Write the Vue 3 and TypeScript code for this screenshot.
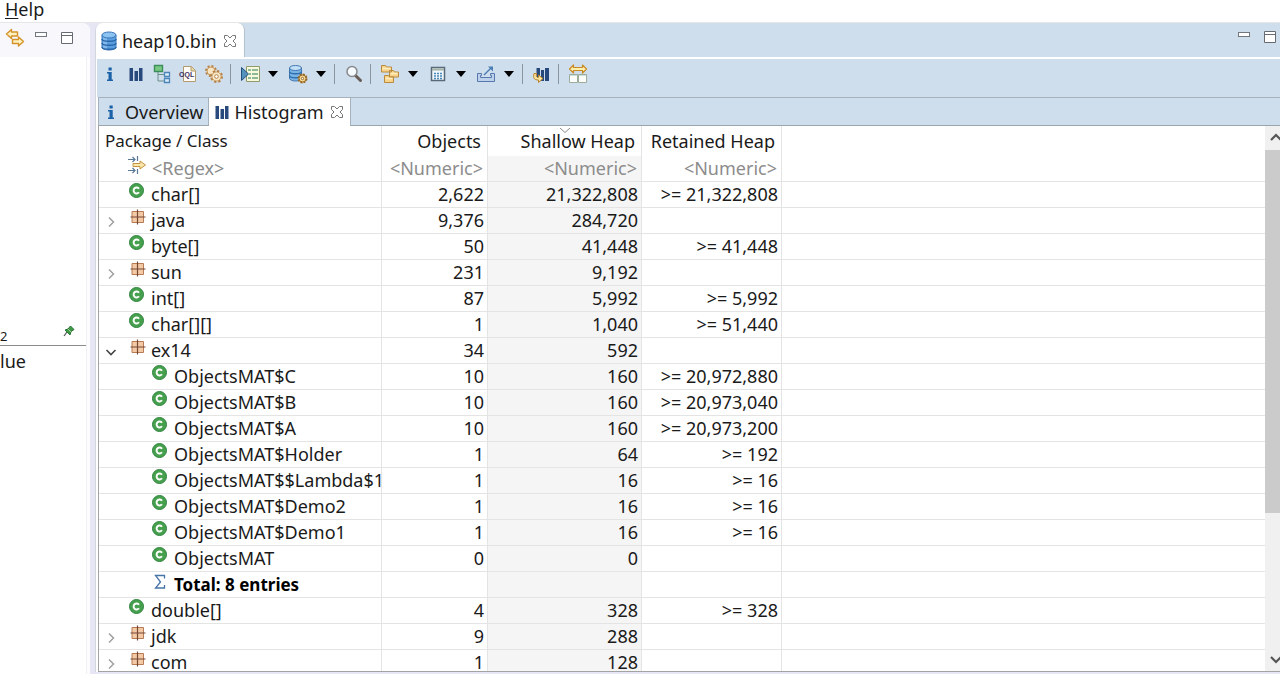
<script setup lang="ts">
import { ref } from 'vue'

type Kind = 'class' | 'package' | 'total'
interface Row {
  name: string
  kind: Kind
  depth: number
  objects: string
  shallow: string
  retained: string
  open?: boolean
}

const row = (name: string, kind: Kind, depth: number, objects = '', shallow = '', retained = '', open = false): Row => ({
  name, kind, depth, objects, shallow, retained, open,
})

const rows = ref<Row[]>([
  row('char[]', 'class', 0, '2,622', '21,322,808', '>= 21,322,808'),
  row('java', 'package', 0, '9,376', '284,720'),
  row('byte[]', 'class', 0, '50', '41,448', '>= 41,448'),
  row('sun', 'package', 0, '231', '9,192'),
  row('int[]', 'class', 0, '87', '5,992', '>= 5,992'),
  row('char[][]', 'class', 0, '1', '1,040', '>= 51,440'),
  row('ex14', 'package', 0, '34', '592', '', true),
  row('ObjectsMAT$C', 'class', 1, '10', '160', '>= 20,972,880'),
  row('ObjectsMAT$B', 'class', 1, '10', '160', '>= 20,973,040'),
  row('ObjectsMAT$A', 'class', 1, '10', '160', '>= 20,973,200'),
  row('ObjectsMAT$Holder', 'class', 1, '1', '64', '>= 192'),
  row('ObjectsMAT$$Lambda$1', 'class', 1, '1', '16', '>= 16'),
  row('ObjectsMAT$Demo2', 'class', 1, '1', '16', '>= 16'),
  row('ObjectsMAT$Demo1', 'class', 1, '1', '16', '>= 16'),
  row('ObjectsMAT', 'class', 1, '0', '0'),
  row('Total: 8 entries', 'total', 1),
  row('double[]', 'class', 0, '4', '328', '>= 328'),
  row('jdk', 'package', 0, '9', '288'),
  row('com', 'package', 0, '1', '128'),
])

const regex = ref('')
const numeric = ref(['', '', ''])
const numericLabels = ['Objects filter', 'Shallow heap filter', 'Retained heap filter']
</script>

<template>
  <div class="app">
    <nav class="menubar"><button type="button" class="menu"><u>H</u>elp</button></nav>
    <div class="workbench">
      <aside class="side">
        <div class="side-bar">
          <button type="button" aria-label="Link with editor">
            <svg width="20" height="20" viewBox="0 0 20 20" fill="#fff1bd" stroke="#d4922b" stroke-width="1.4" stroke-linejoin="round">
              <path d="M1.500 6 6.500 1.500V4h6v4h-6v2.500z" />
              <path d="M18.500 13.500 13.500 9v2.500h-6v4h6V18z" />
            </svg>
          </button>
          <button type="button" aria-label="Minimize">
            <svg width="14" height="14" viewBox="0 0 14 14"><rect x="1.500" y="1.500" width="11" height="4" fill="#fff" stroke="#72767e" /></svg>
          </button>
          <button type="button" aria-label="Maximize">
            <svg width="14" height="14" viewBox="0 0 14 14"><path d="M1.500 1.500h11v11h-11zM1.500 4.500h11" fill="#fff" stroke="#666a72" /></svg>
          </button>
        </div>
        <div class="side-body">
          <div class="side-space"></div>
          <div class="side-tab">
            <span>2</span>
            <button type="button" aria-label="Pin">
              <svg width="12" height="12" viewBox="0 0 12 12"><path d="m1 11 3-4" stroke="#555" stroke-width="1.200" /><path d="m2 5 3-1 2.500-3L11 4.500 8 6.500 7 10z" fill="#3f9a45" stroke="#2a7135" /><path d="m5 4 3 3" stroke="#a5d69b" /></svg>
            </button>
          </div>
          <div class="side-head">lue</div>
        </div>
      </aside>

      <main class="editor">
        <div class="file-bar">
          <div class="file-tab">
            <svg width="18" height="20" viewBox="0 0 18 20" stroke="#3a77ba">
              <path d="M2 4v12c0 4 14 4 14 0V4z" fill="#5b9ee0" />
              <path d="M4 6v12M6 7v12" stroke="#a9d3f6" />
              <path d="M2 8c0 3 14 3 14 0M2 12c0 3 14 3 14 0M2 16c0 3 14 3 14 0" fill="none" stroke="#2865a8" stroke-width="1.500" />
              <ellipse cx="9" cy="4" rx="7" ry="3" fill="#8cc3f0" />
            </svg>
            <span>heap10.bin</span>
            <button type="button" aria-label="Close heap10.bin">
              <svg width="14" height="14" viewBox="0 0 14 14"><path d="M1.500 1.500h3L7 4l2.500-2.500h3v3L10 7l2.500 2.500v3h-3L7 10l-2.500 2.500h-3v-3L4 7 1.500 4.500z" fill="#fff" stroke="#777" /></svg>
            </button>
          </div>
          <div class="window-tools">
            <button type="button" aria-label="Minimize editor">
              <svg width="14" height="14" viewBox="0 0 14 14"><rect x="1.500" y="2.500" width="11" height="4" fill="#fff" stroke="#72767e" /></svg>
            </button>
            <button type="button" aria-label="Maximize editor">
              <svg width="14" height="14" viewBox="0 0 14 14"><path d="M1.500 1.500h11v11h-11zM1.500 4.500h11" fill="#fff" stroke="#666a72" /></svg>
            </button>
          </div>
        </div>

        <div class="toolbar" role="toolbar">
          <button type="button" class="tool" aria-label="Overview"><svg width="20" height="20" viewBox="0 0 20 20"><path d="M8.500 3.500h3.200v3H8.500zM7 8h4.700v7.500H13V17H7v-1.500h1.500v-6H7z" fill="#1c62a8" /></svg></button>
          <button type="button" class="tool" aria-label="Histogram"><svg width="20" height="20" viewBox="0 0 20 20" fill="#28497c"><path d="M3.500 4H7v13H3.500zM8.500 7h3.500v10H8.500zM13 4h3.500v13H13z" /></svg></button>
          <button type="button" class="tool" aria-label="Dominator tree"><svg width="20" height="20" viewBox="0 0 20 20"><path d="M6 7v10h7M6 10.500h7" fill="none" stroke="#6b8d8c" /><path d="M2.500 1.500h8v6h-8z" fill="#79c884" stroke="#3b8e59" stroke-width="1.400" /><path d="M12.500 8.500h5v4h-5zM12.500 14.500h5v4h-5z" fill="#ddecfa" stroke="#4a86ba" stroke-width="1.300" /></svg></button>
          <button type="button" class="tool" aria-label="OQL">
            <svg width="20" height="20" viewBox="0 0 20 20"><path d="M5.500 2.500h8l4 4v11h-12z" fill="#fffdf5" stroke="#b19a70" /><path d="M13 2.500V7h4.500" fill="#e8d6a7" stroke="#b19a70" /><text x="1" y="13" class="oql">OQL</text></svg>
          </button>
          <button type="button" class="tool" aria-label="Run expert system">
            <svg width="20" height="20" viewBox="0 0 20 20" fill="#f7e6c3" stroke="#b5834a"><circle cx="7" cy="7" r="5" stroke-width="2" stroke-dasharray="2 1.900" /><circle cx="7" cy="7" r="4" stroke-width=".8" /><circle cx="12.500" cy="12.500" r="5.500" stroke-width="2" stroke-dasharray="2.300 2" /><circle cx="12.500" cy="12.500" r="4.600" stroke-width=".8" /><circle cx="12.500" cy="12.500" r="1.800" fill="#fff" /></svg>
          </button>
          <i class="sep"></i>
          <span class="split">
            <button type="button" class="tool" aria-label="Run report"><svg width="20" height="20" viewBox="0 0 20 20"><path d="M6.500 2.500h13v15h-13z" fill="#f7f9df" stroke="#919a68" /><path d="M8 6h3m1 0h6M9 10h2m1 0h6M8 14h3m1 0h6" stroke="#6ba480" stroke-width="1.600" /><path d="M1.500 3.500v13l7-6.500z" fill="#5491bd" stroke="#234f7c" /></svg></button>
            <button type="button" class="drop" aria-label="Run report options"><svg width="12" height="6" viewBox="0 0 12 6"><path d="M1 0h10L6 6z" /></svg></button>
          </span>
          <span class="split">
            <button type="button" class="tool" aria-label="Query browser"><svg width="20" height="20" viewBox="0 0 20 20"><path d="M1.500 4v10c0 4 12 4 12 0V4z" fill="#79b2e5" stroke="#4178af" /><path d="M1.500 7.500c0 3 12 3 12 0M1.500 11.500c0 3 12 3 12 0" fill="none" stroke="#2e6eaf" stroke-width="1.400" /><ellipse cx="7.500" cy="4" rx="6" ry="2.500" fill="#c2e0f7" stroke="#4178af" /><circle cx="14.500" cy="14.500" r="4" fill="#f9df98" stroke="#956524" stroke-width="2" stroke-dasharray="2 1.100" /><circle cx="14.500" cy="14.500" r="3.500" fill="#f9df98" stroke="#956524" /><circle cx="14.500" cy="14.500" r="1.200" fill="#fff" stroke="#956524" /></svg></button>
            <button type="button" class="drop" aria-label="Query options"><svg width="12" height="6" viewBox="0 0 12 6"><path d="M1 0h10L6 6z" /></svg></button>
          </span>
          <i class="sep"></i>
          <button type="button" class="tool" aria-label="Find"><svg width="20" height="20" viewBox="0 0 20 20"><path d="m11.500 11.500 5 5" stroke="#675c56" stroke-width="3" stroke-linecap="round" /><circle cx="8" cy="7.500" r="5" fill="#f6fbff" stroke="#87888b" stroke-width="1.500" /></svg></button>
          <i class="sep"></i>
          <span class="split">
            <button type="button" class="tool" aria-label="Group result"><svg width="20" height="20" viewBox="0 0 20 20" fill="#f8d48a" stroke="#b98a3e"><path d="M1.500 3V1.500h4l1 1.500h5v5h-10zM9.500 8V6.500h4L14.500 8h4v5h-9zM4.500 13v-1.500h4L9.500 13h4v5.500h-9z" /><path d="M2.500 4.500h8M10.500 9.500h7M5.500 14.500h7" stroke="#ffeec2" stroke-width="1.500" /></svg></button>
            <button type="button" class="drop" aria-label="Grouping options"><svg width="12" height="6" viewBox="0 0 12 6"><path d="M1 0h10L6 6z" /></svg></button>
          </span>
          <span class="split">
            <button type="button" class="tool" aria-label="Calculate retained size"><svg width="20" height="20" viewBox="0 0 20 20"><path d="M3.500 3.500h13v13h-13z" fill="#eff7fc" stroke="#586979" stroke-width="1.500" /><path d="M4 5.500h12" stroke="#a4b2a6" stroke-width="2" /><path d="M6 9.500h8M6 12h8M6 14.500h8" stroke="#4c88b7" stroke-width="1.500" stroke-dasharray="2 1" /></svg></button>
            <button type="button" class="drop" aria-label="Calculation options"><svg width="12" height="6" viewBox="0 0 12 6"><path d="M1 0h10L6 6z" /></svg></button>
          </span>
          <span class="split">
            <button type="button" class="tool" aria-label="Export"><svg width="20" height="20" viewBox="0 0 20 20"><path d="M1.500 9.500h4v2h-1v2h11v-2h-1v-2h4v8h-17z" fill="#bdd1eb" stroke="#5778ae" /><path d="m8 11 7-7" stroke="#4d7db5" stroke-width="1.500" /><path d="M12 2.500h5v5z" fill="#4d7db5" /></svg></button>
            <button type="button" class="drop" aria-label="Export options"><svg width="12" height="6" viewBox="0 0 12 6"><path d="M1 0h10L6 6z" /></svg></button>
          </span>
          <i class="sep"></i>
          <button type="button" class="tool" aria-label="Compare histogram"><svg width="20" height="20" viewBox="0 0 20 20"><path d="M4.500 4H8v12H4.500zM9 6h3v11H9zM13 4h4v13h-4z" fill="#28497c" /><path d="M2 9.500c-1 4.500 0 6.500 4.500 6.500v2.500L11 14.500 6.500 11v2.500C4.500 13.500 4 12.500 4.500 9.500z" fill="#fae39d" stroke="#b9842b" /></svg></button>
          <i class="sep"></i>
          <button type="button" class="tool" aria-label="Compare tables"><svg width="20" height="20" viewBox="0 0 20 20"><path d="m1.500 5 4-4v2.500h9V1l4 4-4 4V6.500h-9V9z" fill="#fff0ae" stroke="#c98b26" stroke-width="1.200" stroke-linejoin="round" /><path d="M1.500 10.500h8v8h-8zM10.500 10.500h8v8h-8z" fill="#fbfdfb" stroke="#9cad9d" /><path d="M2 11.500h7M11 11.500h7" stroke="#ccdfdb" /></svg></button>
        </div>

        <div class="tabs" role="tablist">
          <button type="button" role="tab" class="tab" aria-selected="false">
            <svg width="20" height="20" viewBox="0 0 20 20"><path d="M7.500 3.500h3.200v3H7.500zM6 8h4.700v7.500H12V17H6v-1.500h1.500v-6H6z" fill="#1c62a8" /></svg>
            <span>Overview</span>
          </button>
          <button type="button" role="tab" class="tab active" aria-selected="true">
            <svg width="20" height="20" viewBox="0 0 20 20" fill="#28497c"><path d="M3.500 4H7v13H3.500zM8.500 7h3.500v10H8.500zM13 4h3.500v13H13z" /></svg>
            <span>Histogram</span>
            <svg class="close" width="14" height="14" viewBox="0 0 14 14"><path d="M1.500 1.500h3L7 4l2.500-2.500h3v3L10 7l2.500 2.500v3h-3L7 10l-2.500 2.500h-3v-3L4 7 1.500 4.500z" fill="#fff" stroke="#777" /></svg>
          </button>
        </div>

        <div class="content">
          <div class="grid">
            <table>
              <colgroup><col class="c-name" /><col class="c-obj" /><col class="c-shallow" /><col class="c-retained" /><col /></colgroup>
              <thead>
                <tr>
                  <th scope="col" class="first">Package / Class</th>
                  <th scope="col">Objects</th>
                  <th scope="col" class="sorted">
                    <svg width="12" height="6" viewBox="0 0 12 6" fill="none" stroke="#8b8b8b"><path d="m1 0 5 4.500L11 0" /></svg>
                    Shallow Heap
                  </th>
                  <th scope="col">Retained Heap</th>
                  <td></td>
                </tr>
              </thead>
              <tbody>
                <tr class="filter">
                  <td>
                    <div class="name">
                      <span class="twist"></span>
                      <svg class="icon" width="20" height="20" viewBox="0 0 20 20"><path d="M0 3.500h7M0 14.500h7M4.500 1 7 3.500 4.500 6M4.500 12 7 14.500 4.500 17M9.500 0v5M9.500 13v5" fill="none" stroke="#587895" stroke-width="1.200" /><path d="M5 7.500h7V5l5.500 4-5.500 4v-2.500H5z" fill="#fbe7ab" stroke="#c29345" /></svg>
                      <input v-model="regex" type="text" placeholder="<Regex>" aria-label="Class name filter" />
                    </div>
                  </td>
                  <td v-for="(label, i) in numericLabels" :key="label" :class="{ shade: i === 1 }">
                    <input v-model="numeric[i]" type="text" placeholder="<Numeric>" :aria-label="label" />
                  </td>
                  <td></td>
                </tr>
                <tr v-for="r in rows" :key="r.name">
                  <td>
                    <div class="name" :class="{ child: r.depth === 1, total: r.kind === 'total' }">
                      <button v-if="r.kind === 'package'" type="button" class="twist" :aria-label="'Toggle ' + r.name" :aria-expanded="r.open">
                        <svg width="12" height="12" viewBox="0 0 12 12" fill="none">
                          <path v-if="r.open" d="m1.500 4 4.500 4.500L10.500 4" stroke="#444" stroke-width="1.600" />
                          <path v-else d="m4 1.500 4.500 4.500L4 10.500" stroke="#a0a0a0" stroke-width="1.500" />
                        </svg>
                      </button>
                      <span v-else class="twist"></span>
                      <svg v-if="r.kind === 'class'" class="icon" width="18" height="18" viewBox="0 0 18 18">
                        <circle cx="8.500" cy="8.500" r="7" fill="#46a04d" stroke="#2f8440" />
                        <path d="M11 6.700A3 3 0 1 0 11 10.300" fill="none" stroke="#fff" stroke-width="1.900" />
                      </svg>
                      <svg v-else-if="r.kind === 'package'" class="icon" width="18" height="18" viewBox="0 0 18 18">
                        <path d="M4 3.500h11.500v11H4z" fill="#f3caa5" stroke="#b77b55" />
                        <path d="M9.500 1.500v15M2.500 9h15" stroke="#764837" stroke-width="1.200" />
                      </svg>
                      <svg v-else class="icon" width="18" height="18" viewBox="0 0 18 18"><path d="M13.500 6.500v-3h-9l5 6.500-5 6h9v-3" fill="none" stroke="#4774a8" stroke-width="1.300" /></svg>
                      <span class="label">{{ r.name }}</span>
                    </div>
                  </td>
                  <td>{{ r.objects }}</td>
                  <td class="shade">{{ r.shallow }}</td>
                  <td>{{ r.retained }}</td>
                  <td></td>
                </tr>
              </tbody>
            </table>
          </div>
          <div class="scroll" aria-hidden="true">
            <svg width="22" height="24" viewBox="0 0 22 24" fill="none"><path d="m6 14 5-5 5 5" stroke="#555" stroke-width="2.200" /></svg>
            <div class="track"><div class="thumb"></div></div>
            <svg width="22" height="24" viewBox="0 0 22 24" fill="none"><path d="m6 10 5 5 5-5" stroke="#555" stroke-width="2.200" /></svg>
          </div>
        </div>
      </main>
    </div>
  </div>
</template>

<style>
body {
  margin: 0;
  overflow: hidden;
}
</style>

<style scoped>
.app {
  display: flex;
  flex-direction: column;
  height: 100vh;
  overflow: hidden;
  background: #fff;
  color: #1a1a1a;
  font: 18px/24px "Noto Sans", "Open Sans", sans-serif;
}
* { box-sizing: border-box; }
button {
  padding: 0;
  border: 0;
  background: none;
  color: inherit;
  font: inherit;
}
svg { display: block; flex: none; }
.menubar {
  flex: none;
  height: 22px;
  padding-left: 5px;
}
.menu { display: block; height: 18px; line-height: 18px; }
.menu u { text-underline-offset: 2px; }
.workbench {
  display: flex;
  flex: 1;
  min-height: 0;
  border-top: 1px solid #e6e6e6;
  background: #e6e6f5;
}
.side {
  display: flex;
  flex: none;
  flex-direction: column;
  width: 90px;
  border-top-right-radius: 8px;
  background: #fdfdff;
  overflow: hidden;
}
.side-bar {
  display: flex;
  gap: 12px;
  height: 34px;
  padding: 5px 0 0 5px;
  background: #f7f7fc;
}
.side-bar button { height: 20px; }
.side-bar button + button { height: 14px; }
.side-bar button:nth-child(2) { margin-left: -3px; margin-top: 3px; }
.side-bar button:nth-child(3) { margin-top: 3px; }
.side-body {
  display: flex;
  flex: 1;
  flex-direction: column;
  margin-right: 3px;
  border-right: 1px solid #f0f0f6;
  background: #fff;
}
.side-space { height: 264px; }
.side-tab {
  display: flex;
  justify-content: space-between;
  height: 25px;
  padding-right: 11px;
  border-bottom: 1px solid #8c8c8c;
  font-size: 13px;
  line-height: 30px;
}
.side-tab button { height: 20px; }
.side-head { padding-top: 3px; }
.editor {
  display: flex;
  flex: 1;
  flex-direction: column;
  min-width: 0;
  margin: 0 0 2px 5px;
  border-left: 1px solid #d5d5de;
  border-top-left-radius: 8px;
  background: #fff;
}
.file-bar {
  display: flex;
  flex: none;
  justify-content: space-between;
  height: 36px;
  border-bottom: 2px solid #fff;
  border-top-left-radius: 8px;
  background: #cfdeed;
}
.file-tab {
  display: flex;
  align-items: center;
  gap: 4px;
  padding: 2px 7px 0 4px;
  border-right: 1px solid #b4c0cc;
  border-radius: 7px 7px 0 0;
  background: #fff;
}
.file-tab button { margin-left: 2px; }
.window-tools {
  display: flex;
  gap: 12px;
  padding: 7px 3px 0 0;
}
.window-tools button { height: 14px; }
.toolbar {
  display: flex;
  flex: none;
  align-items: center;
  height: 38px;
  margin-left: 1px;
  padding-bottom: 8px;
  background: #cfdeed;
}
.tool {
  display: grid;
  flex: none;
  width: 26px;
  height: 28px;
  place-items: center;
}
.drop {
  display: grid;
  width: 20px;
  height: 28px;
  place-items: center;
}
.split { display: flex; }
.split + .split { margin-left: 2px; }
.sep {
  width: 1px;
  height: 20px;
  margin: 0 6px 0 3px;
  background: #8a949e;
}
.oql { font: bold 7px "Liberation Sans", sans-serif; fill: #3b2f63; }
.tabs {
  display: flex;
  flex: none;
  height: 29px;
  margin-left: 2px;
  border-top: 1px solid #a5b1bd;
  border-bottom: 1px solid #9aa5b0;
  border-left: 1px solid #a5b1bd;
  background: #cfdeed;
}
.tab {
  display: flex;
  align-items: center;
  gap: 3px;
  padding: 1px 4px 0 3px;
  border-right: 1px solid #a5b1bd;
}
.tab.active { margin-bottom: -1px; background: #fff; padding: 0 6px 0 3px; }
.close { margin-left: 3px; }
.content {
  display: flex;
  flex: 1;
  min-height: 0;
  margin-left: 2px;
  border-bottom: 1px solid #a3a3a3;
  border-left: 1px solid #a3a3a3;
}
.grid { flex: 1; min-width: 0; overflow: hidden; }
table {
  width: 100%;
  border-collapse: separate;
  border-spacing: 0;
  table-layout: fixed;
}
.c-name { width: 283px; }
.c-obj { width: 106px; }
.c-shallow { width: 154px; }
.c-retained { width: 140px; }
th, td {
  height: 26px;
  padding: 0 3px 0 0;
  border-right: 1px solid #e4e4e4;
  border-bottom: 1px solid #e4e4e4;
  line-height: 25px;
  text-align: right;
  white-space: nowrap;
}
td:first-child { padding: 0; }
td:last-child { border-right: 0; }
thead th, thead td {
  height: 30px;
  padding-right: 6px;
  border-bottom: 0;
  font-weight: 400;
  line-height: 30px;
}
th.first { padding-left: 6px; font-size: 17px; text-align: left; }
.sorted { position: relative; }
.sorted svg { position: absolute; top: 2px; right: 0; left: 0; margin: 0 auto; }
.shade { background: #f5f5f5; }
.name {
  display: flex;
  height: 25px;
  text-align: left;
}
.name.child { padding-left: 23px; }
.twist {
  display: grid;
  flex: none;
  width: 24px;
  height: 27px;
  margin-right: 5px;
  place-items: center;
}
.icon { margin-right: 5px; }
.total .label { font-size: 17px; font-weight: 700; color: #000; }
.filter .icon { margin-right: 4px; }
input {
  display: block;
  width: 100%;
  height: 25px;
  padding: 0;
  border: 0;
  outline: 0;
  background: none;
  color: #1a1a1a;
  font: inherit;
  text-align: right;
}
.filter td { padding-right: 4px; }
.name input { text-align: left; }
input::placeholder { color: #8c8c8c; opacity: 1; }
.scroll {
  display: flex;
  flex: none;
  flex-direction: column;
  width: 15px;
  background: #f0f0f0;
  overflow: hidden;
}
.track { flex: 1; }
.thumb { height: 73%; background: #cbcbcb; }
</style>
